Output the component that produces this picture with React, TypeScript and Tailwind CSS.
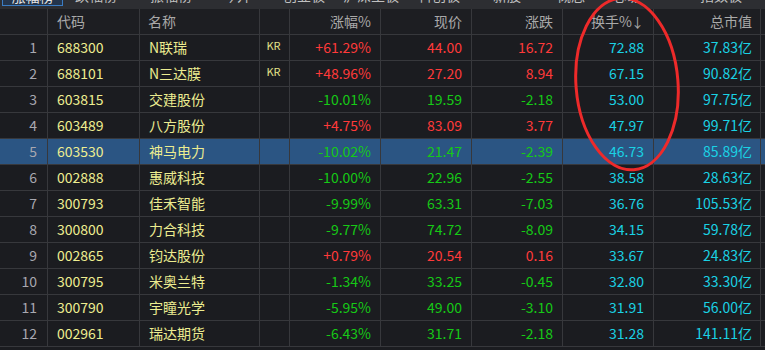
import React from "react";

type Row = {
  i: number;
  code: string;
  name: string;
  kr?: boolean;
  pct: string;
  price: string;
  chg: string;
  turn: string;
  cap: string;
};

const rows: Row[] = [
  { i: 1, code: "688300", name: "N联瑞", kr: true, pct: "+61.29%", price: "44.00", chg: "16.72", turn: "72.88", cap: "37.83亿" },
  { i: 2, code: "688101", name: "N三达膜", kr: true, pct: "+48.96%", price: "27.20", chg: "8.94", turn: "67.15", cap: "90.82亿" },
  { i: 3, code: "603815", name: "交建股份", pct: "-10.01%", price: "19.59", chg: "-2.18", turn: "53.00", cap: "97.75亿" },
  { i: 4, code: "603489", name: "八方股份", pct: "+4.75%", price: "83.09", chg: "3.77", turn: "47.97", cap: "99.71亿" },
  { i: 5, code: "603530", name: "神马电力", pct: "-10.02%", price: "21.47", chg: "-2.39", turn: "46.73", cap: "85.89亿" },
  { i: 6, code: "002888", name: "惠威科技", pct: "-10.00%", price: "22.96", chg: "-2.55", turn: "38.58", cap: "28.63亿" },
  { i: 7, code: "300793", name: "佳禾智能", pct: "-9.99%", price: "63.31", chg: "-7.03", turn: "36.76", cap: "105.53亿" },
  { i: 8, code: "300800", name: "力合科技", pct: "-9.77%", price: "74.72", chg: "-8.09", turn: "34.15", cap: "59.78亿" },
  { i: 9, code: "002865", name: "钧达股份", pct: "+0.79%", price: "20.54", chg: "0.16", turn: "33.67", cap: "24.83亿" },
  { i: 10, code: "300795", name: "米奥兰特", pct: "-1.34%", price: "33.25", chg: "-0.45", turn: "32.80", cap: "33.30亿" },
  { i: 11, code: "300790", name: "宇瞳光学", pct: "-5.95%", price: "49.00", chg: "-3.10", turn: "31.91", cap: "56.00亿" },
  { i: 12, code: "002961", name: "瑞达期货", pct: "-6.43%", price: "31.71", chg: "-2.18", turn: "31.28", cap: "141.11亿" },
];

const RED = "text-[#ff3a3a]";
const GREEN = "text-[#16c916]";

function colorOf(v: string) {
  return v.startsWith("-") ? GREEN : RED;
}

const cell = "h-[26px] border-r border-b border-[#37383c] flex items-center shrink-0";

export default function App() {
  return (
    <div className="relative w-[765px] h-[350px] overflow-hidden bg-[#1b1c20] font-['Noto_Sans_CJK_SC','Noto_Sans',sans-serif] text-[14px]">
      {/* tab strip */}
      <div className="h-[9px] bg-[#2d2e32] overflow-hidden">
        <div className="flex mt-[-15px] h-[20px] leading-[20px] text-[#c0c0c0] whitespace-nowrap">
          <span className="ml-[2px] w-[61px] h-[21px] border border-[#3b7cc2] bg-[#24354c] text-center text-[#e6e6e6]">涨幅榜</span>
          <span className="ml-[12px] w-[42px]">跌幅榜</span>
          <span className="ml-[33px] w-[42px]">振幅榜</span>
          <span className="ml-[31px] w-[28px]">今开</span>
          <span className="ml-[32px] w-[42px]">创业板</span>
          <span className="ml-[18px] w-[56px]">沪深主板</span>
          <span className="ml-[19px] w-[42px]">科创板</span>
          <span className="ml-[33px] w-[28px]">新股</span>
          <span className="ml-[36px] w-[28px]">概念</span>
          <span className="ml-[25px] w-[28px]">地域</span>
          <span className="ml-[62px] w-[42px]">指数板</span>
        </div>
      </div>

      {/* header */}
      <div className="flex text-[#a9a9a9] bg-[#1d1e22]">
        <div className={`${cell} w-[48px]`} />
        <div className={`${cell} w-[92px] pl-[9px]`}>代码</div>
        <div className={`${cell} w-[120px] pl-[8px]`}>名称</div>
        <div className={`${cell} w-[30px]`} />
        <div className={`${cell} w-[91px] justify-end pr-[9px]`}>涨幅%</div>
        <div className={`${cell} w-[91px] justify-end pr-[9px]`}>现价</div>
        <div className={`${cell} w-[91px] justify-end pr-[9px]`}>涨跌</div>
        <div className={`${cell} w-[91px] justify-end pr-[9px]`}>
          换手%<span className="text-[13px] ml-[-1px]">↓</span>
        </div>
        <div className={`${cell} w-[107px] justify-end pr-[8px]`}>总市值</div>
        <div className={`${cell} flex-1 border-r-0`} />
      </div>

      {/* rows */}
      {rows.map((r) => {
        const sel = r.i === 5;
        return (
          <div key={r.i} className={`flex ${sel ? "bg-[#2b5583]" : ""}`}>
            <div className={`${cell} w-[48px] justify-end pr-[10px] text-[#a8a8b0]`}>{r.i}</div>
            <div className={`${cell} w-[92px] pl-[9px] text-[#eeee90]`}>{r.code}</div>
            <div className={`${cell} w-[120px] pl-[9px] text-[#ecec90]`}>{r.name}</div>
            <div className={`${cell} w-[30px] justify-center`}>
              {r.kr && <span className="text-[11px] text-[#e4e48a] mt-[-5px] ml-[-2px]">KR</span>}
            </div>
            <div className={`${cell} w-[91px] justify-end pr-[9px] ${colorOf(r.pct)}`}>{r.pct}</div>
            <div className={`${cell} w-[91px] justify-end pr-[9px] ${colorOf(r.chg)}`}>{r.price}</div>
            <div className={`${cell} w-[91px] justify-end pr-[9px] ${colorOf(r.chg)}`}>{r.chg}</div>
            <div className={`${cell} w-[91px] justify-end pr-[9px] text-[#1ad2e4]`}>{r.turn}</div>
            <div className={`${cell} w-[107px] justify-end pr-[8px] text-[#1ad2e4]`}>{r.cap}</div>
            <div className={`${cell} flex-1 border-r-0`} />
          </div>
        );
      })}

      {/* red hand-drawn ellipse */}
      <svg className="absolute left-0 top-0 pointer-events-none" width="765" height="350">
        <ellipse cx="627" cy="84" rx="51" ry="86" fill="none" stroke="#ee2a2a" strokeWidth="3" transform="rotate(-4.5 627 84)" />
      </svg>
    </div>
  );
}
